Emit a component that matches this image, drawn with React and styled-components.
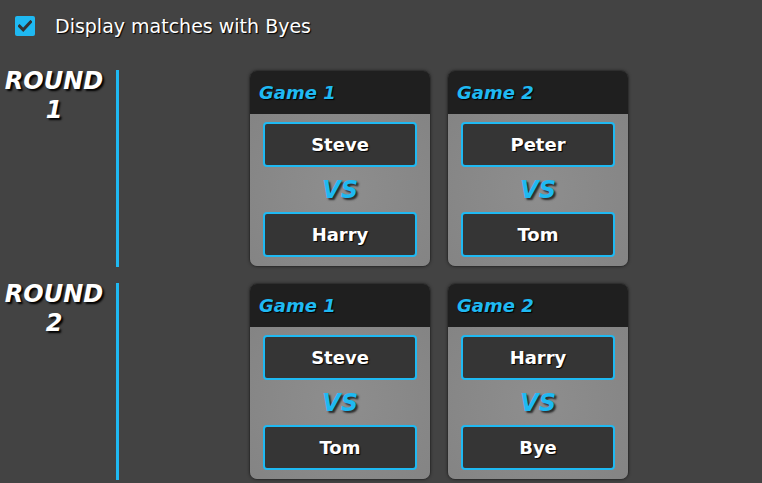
import React from "react";
import styled, { createGlobalStyle } from "styled-components";

const rounds = [
  {
    name: "1",
    games: [
      { title: "Game 1", home: "Steve", away: "Harry" },
      { title: "Game 2", home: "Peter", away: "Tom" },
    ],
  },
  {
    name: "2",
    games: [
      { title: "Game 1", home: "Steve", away: "Tom" },
      { title: "Game 2", home: "Harry", away: "Bye" },
    ],
  },
];

const App = () => {
  return (
    <React.Fragment>
      <GlobalStyle />
      <Page>
        <Toolbar>
          <CheckBox>
            <svg width="14" height="12" viewBox="0 0 14 12">
              <path d="M1.5 6.2 L5.2 9.8 L12.5 2" stroke="#333" strokeWidth="3" fill="none" strokeLinecap="square" />
            </svg>
          </CheckBox>
          <ToggleLabel>Display matches with Byes</ToggleLabel>
        </Toolbar>
        <RoundList>
          {rounds.map((round) => (
            <Round key={round.name}>
              <RoundLabel>
                ROUND
                <br />
                {round.name}
              </RoundLabel>
              <Games>
                {round.games.map((game) => (
                  <Card key={game.title}>
                    <CardHeader>{game.title}</CardHeader>
                    <CardBody>
                      <Player>{game.home}</Player>
                      <Versus>VS</Versus>
                      <Player>{game.away}</Player>
                    </CardBody>
                  </Card>
                ))}
              </Games>
            </Round>
          ))}
        </RoundList>
      </Page>
    </React.Fragment>
  );
};

const blue = "#1fb9f2";

const GlobalStyle = createGlobalStyle`
  html, body {
    margin: 0;
    padding: 0;
    background: #434343;
    overflow: hidden;
  }
  body {
    font-family: "DejaVu Sans", Verdana, sans-serif;
  }
`;

const Page = styled.div`
  width: 762px;
  height: 483px;
  background: #434343;
  color: #fff;
`;

const Toolbar = styled.div`
  height: 52px;
  display: flex;
  align-items: center;
  padding-left: 15px;
  gap: 20px;
`;

const CheckBox = styled.span`
  width: 20px;
  height: 20px;
  border-radius: 2px;
  background: ${blue};
  display: flex;
  align-items: center;
  justify-content: center;
`;

const ToggleLabel = styled.span`
  font-size: 19px;
  color: #fff;
  text-shadow: 1px 1px 1px #000;
`;

const RoundList = styled.div`
  padding-top: 18px;
  display: flex;
  flex-direction: column;
  gap: 16px;
`;

const Round = styled.div`
  display: flex;
`;

const RoundLabel = styled.div`
  width: 108px;
  margin-right: 8px;
  margin-top: -3px;
  text-align: center;
  font-size: 24px;
  line-height: 29px;
  font-weight: bold;
  font-style: italic;
  text-shadow: 2px 2px 2px #000;
`;

const Games = styled.div`
  flex: 1;
  border-left: 3px solid ${blue};
  padding-right: 3px;
  display: flex;
  justify-content: center;
  gap: 16px;
`;

const Card = styled.div`
  width: 182px;
  box-sizing: border-box;
  border: 1px solid #2e2e2e;
  border-radius: 8px;
  overflow: hidden;
  box-shadow: 0 0 3px rgba(0, 0, 0, 0.35);
`;

const CardHeader = styled.div`
  height: 43px;
  display: flex;
  align-items: center;
  padding-left: 9px;
  background: #1f1f1f;
  color: ${blue};
  font-size: 18px;
  font-weight: bold;
  font-style: italic;
  text-shadow: 1px 1px 1px #000;
`;

const CardBody = styled.div`
  padding: 8px 13px 9px;
  background: radial-gradient(circle at 50% 50%, #8e8e8e 0%, #848484 100%);
  display: flex;
  flex-direction: column;
`;

const Player = styled.div`
  height: 45px;
  box-sizing: border-box;
  border: 2px solid ${blue};
  border-radius: 4px;
  background: #353535;
  display: flex;
  align-items: center;
  justify-content: center;
  font-size: 18px;
  font-weight: bold;
  color: #fff;
  text-shadow: 1px 1px 1px #000;
`;

const Versus = styled.div`
  height: 45px;
  display: flex;
  align-items: center;
  justify-content: center;
  color: ${blue};
  font-size: 24px;
  font-weight: bold;
  font-style: italic;
  text-shadow: 2px 2px 2px rgba(0, 0, 0, 0.7);
`;

export default App;
